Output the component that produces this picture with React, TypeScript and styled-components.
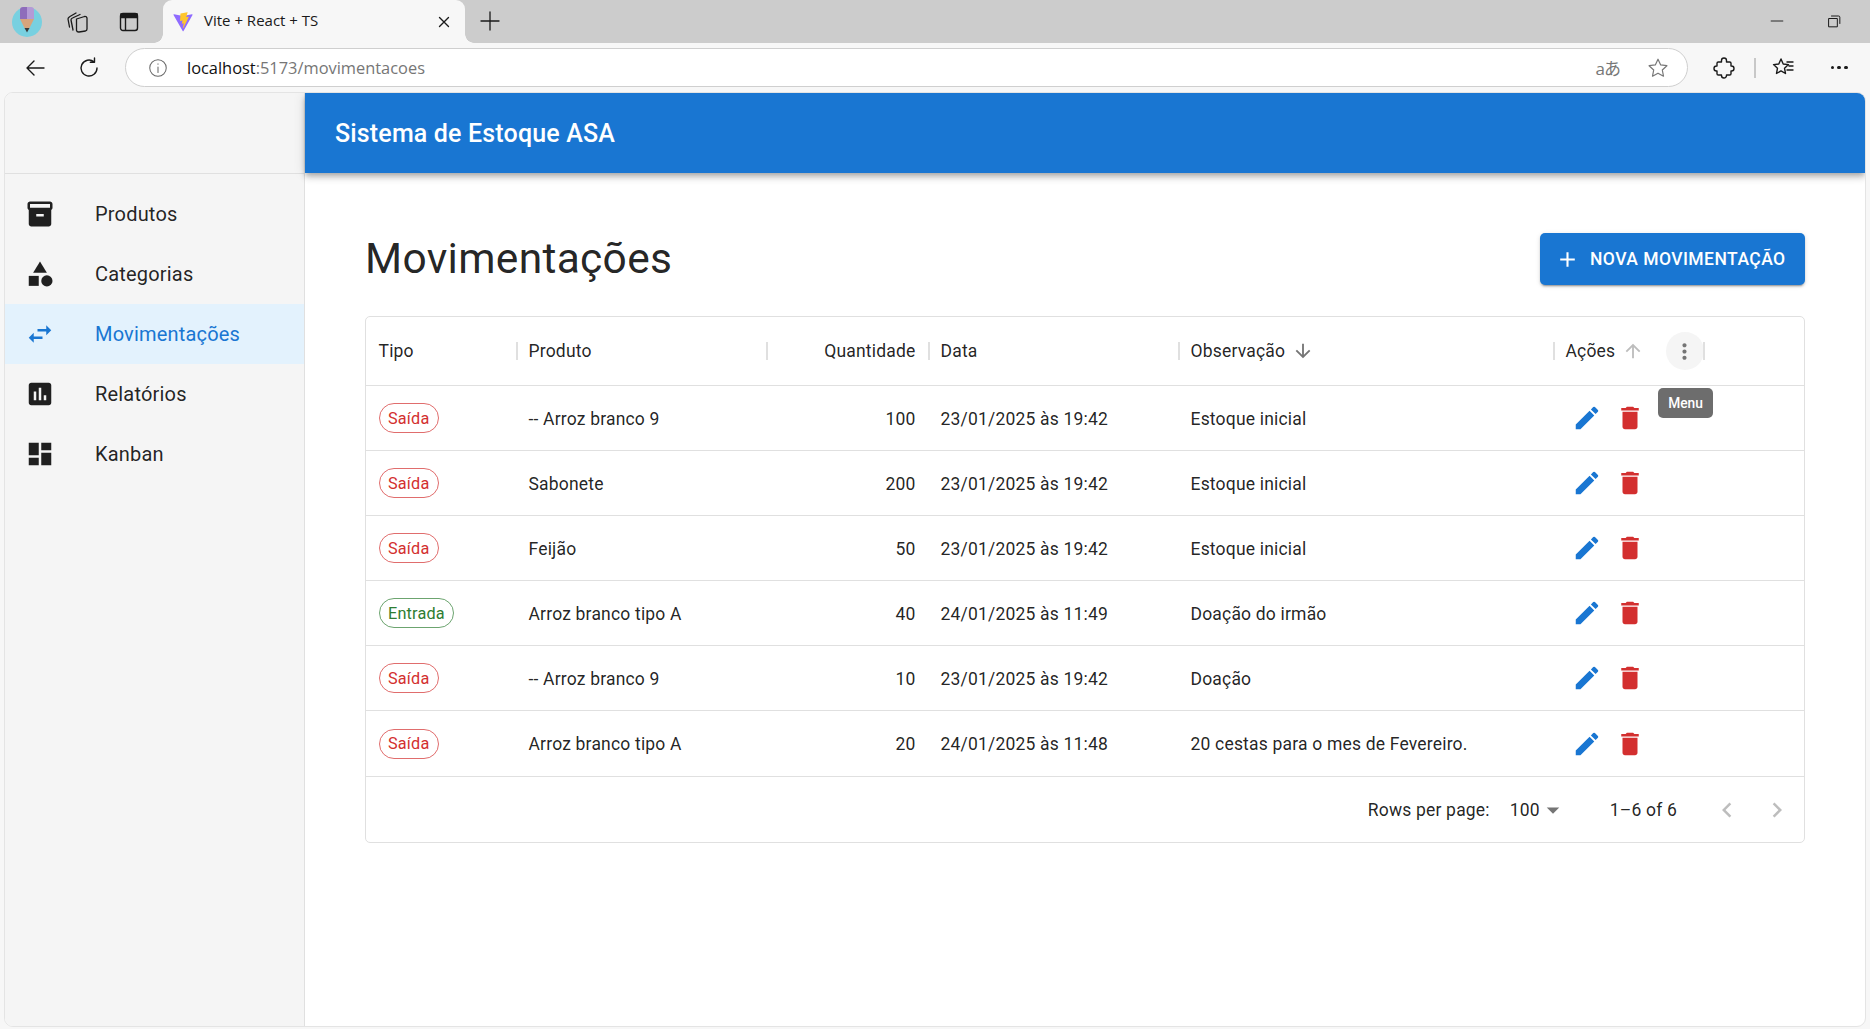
import { ReactNode } from "react"
import styled, { createGlobalStyle } from "styled-components"

const GlobalStyle = createGlobalStyle`
  html, body {
    margin: 0;
    padding: 0;
    background: #f7f7f7;
    overflow: hidden;
  }
  body {
    font-family: Roboto, "Liberation Sans", sans-serif;
    color: rgba(0, 0, 0, 0.87);
  }
  * { box-sizing: border-box; }
`

const Window = styled.div`
  width: 1870px;
  height: 1029px;
  display: flex;
  flex-direction: column;
`

/* browser chrome */
const TabStrip = styled.div`
  height: 43px;
  background: #cccccc;
  display: flex;
  align-items: center;
  padding-left: 12px;
  flex-shrink: 0;
`
const StripIcon = styled.div<{ $w: number }>`
  width: ${p => p.$w}px;
  display: flex;
  align-items: center;
  justify-content: center;
  flex-shrink: 0;
`
const Tab = styled.div`
  position: relative;
  width: 302px;
  height: 43px;
  margin-left: 19px;
  background: #f7f7f7;
  border-radius: 9px 9px 0 0;
  display: flex;
  align-items: center;
  padding: 0 12px 0 10px;
  font-family: "Open Sans", sans-serif;
  font-size: 15px;
  color: #1a1a1a;
  &::before,
  &::after {
    content: "";
    position: absolute;
    bottom: 0;
    width: 9px;
    height: 9px;
  }
  &::before {
    left: -9px;
    background: radial-gradient(circle at 0 0, #cccccc 8.5px, #f7f7f7 9px);
  }
  &::after {
    right: -9px;
    background: radial-gradient(circle at 100% 0, #cccccc 8.5px, #f7f7f7 9px);
  }
`
const TabTitle = styled.span`
  margin-left: 11px;
  padding-bottom: 3px;
  flex: 1;
`
const NewTab = styled.div`
  margin-left: 13px;
  padding-bottom: 2px;
  display: flex;
`
const WindowButtons = styled.div`
  margin-left: auto;
  display: flex;
  gap: 37px;
  padding: 0 26px 2px 0;
`
const AddressRow = styled.div`
  height: 49px;
  background: #f7f7f7;
  display: flex;
  align-items: center;
  flex-shrink: 0;
  padding-left: 23px;
`
const NavIcon = styled.div<{ $w: number }>`
  width: ${p => p.$w}px;
  display: flex;
  justify-content: flex-start;
`
const AddressBar = styled.div`
  width: 1563px;
  height: 39px;
  margin-left: -6px;
  background: #ffffff;
  border: 1px solid #cfcfcf;
  border-radius: 20px;
  display: flex;
  align-items: center;
  padding: 0 17px 0 21px;
  font-family: "Open Sans", sans-serif;
  font-size: 16.4px;
`
const Url = styled.span`
  margin-left: 18px;
  flex: 1;
  color: #111;
  span { color: #767676; }
`
const BarIcons = styled.div`
  display: flex;
  align-items: center;
  gap: 26px;
`
const TranslateGlyph = styled.span`
  font-family: "Open Sans", "Noto Sans CJK JP", sans-serif;
  font-size: 17px;
  color: #777777;
  letter-spacing: -1px;
`
const Toolbar = styled.div`
  display: flex;
  align-items: center;
  margin-left: 24px;
  flex: 1;
`
const ToolSep = styled.div`
  width: 1.5px;
  height: 20px;
  background: #c8c8c8;
  margin: 0 15.5px 0 18px;
`
const MoreDots = styled.div`
  display: flex;
  gap: 3.6px;
  margin-left: 35.5px;
`
const Dot = styled.span`
  width: 3.4px;
  height: 3.4px;
  border-radius: 50%;
  background: #1a1a1a;
`

/* app */
const AppFrame = styled.div`
  flex: 1;
  margin: 0 4px 2px 4px;
  display: flex;
  background: #ffffff;
  border: 1px solid #e4e4e4;
  border-radius: 9px;
  overflow: hidden;
  min-height: 0;
`
const Drawer = styled.aside`
  width: 300px;
  flex-shrink: 0;
  background: #f5f5f5;
  border-right: 1px solid #e0e0e0;
`
const DrawerHead = styled.div`
  height: 81px;
  border-bottom: 1px solid #e0e0e0;
  margin-bottom: 10px;
`
const NavItem = styled.div<{ $active?: boolean }>`
  height: 60px;
  display: flex;
  align-items: center;
  padding-left: 20px;
  gap: 40px;
  font-size: 20px;
  letter-spacing: 0.00938em;
  background: ${p => (p.$active ? "#e3f2fd" : "transparent")};
  color: ${p => (p.$active ? "#1976d2" : "rgba(0, 0, 0, 0.87)")};
`
const Content = styled.div`
  flex: 1;
  min-width: 0;
  display: flex;
  flex-direction: column;
`
const AppBar = styled.header`
  height: 80px;
  background: #1976d2;
  color: #ffffff;
  display: flex;
  align-items: center;
  padding-left: 30px;
  font-size: 25px;
  font-weight: 500;
  letter-spacing: 0.0065em;
  box-shadow: 0 2.5px 5px -1px rgba(0, 0, 0, 0.2), 0 5px 6px 0 rgba(0, 0, 0, 0.14), 0 1px 12px 0 rgba(0, 0, 0, 0.12);
  position: relative;
`
const Main = styled.main`
  padding: 60px;
`
const TitleRow = styled.div`
  display: flex;
  align-items: center;
  justify-content: space-between;
  height: 52px;
  margin-bottom: 31px;
`
const Title = styled.h1`
  margin: 0;
  font-size: 42.5px;
  font-weight: 400;
  line-height: 1;
  letter-spacing: 0.00735em;
`
const PrimaryButton = styled.button`
  height: 52px;
  width: 265px;
  border: 0;
  border-radius: 5px;
  background: #1976d2;
  color: #ffffff;
  font-family: inherit;
  font-size: 17.5px;
  font-weight: 500;
  letter-spacing: 0.45px;
  display: flex;
  align-items: center;
  gap: 10px;
  padding: 0 0 0 15px;
  white-space: nowrap;
  box-shadow: 0 3px 1px -2px rgba(0, 0, 0, 0.2), 0 2px 2px 0 rgba(0, 0, 0, 0.14), 0 1px 5px 0 rgba(0, 0, 0, 0.12);
`
const Grid = styled.div`
  position: relative;
  border: 1px solid #e0e0e0;
  border-radius: 5px;
  font-size: 17.5px;
  letter-spacing: 0.01071em;
`
const columns = "150px 250px 162px 250px 375px 150px"
const HeadRow = styled.div`
  display: grid;
  grid-template-columns: ${columns};
  height: 69px;
  border-bottom: 1px solid #e0e0e0;
`
const Row = styled.div<{ $tall?: boolean }>`
  display: grid;
  grid-template-columns: ${columns};
  height: ${p => (p.$tall ? 66 : 65)}px;
  border-bottom: 1px solid #e0e0e0;
`
const HeadCell = styled.div<{ $right?: boolean }>`
  display: flex;
  align-items: center;
  justify-content: ${p => (p.$right ? "flex-end" : "flex-start")};
  padding: 0 12.5px;
  position: relative;
  gap: 7px;
  &::after {
    content: "";
    position: absolute;
    right: -2px;
    top: 25px;
    height: 18px;
    width: 2px;
    background: #e0e0e0;
  }
`
const Cell = styled.div<{ $right?: boolean }>`
  display: flex;
  align-items: center;
  justify-content: ${p => (p.$right ? "flex-end" : "flex-start")};
  padding: 1px 12.5px 0;
  white-space: nowrap;
`
const ChipCell = styled(Cell)`
  padding-top: 0;
`
const ActionsCell = styled(Cell)`
  padding: 0 0 0 12px;
`
const ActionButton = styled.div`
  width: 43px;
  height: 43px;
  display: flex;
  align-items: center;
  justify-content: center;
`
const Chip = styled.span<{ $in: boolean }>`
  height: 30px;
  display: inline-flex;
  align-items: center;
  padding: 0 8.5px;
  border-radius: 15px;
  font-size: 16.25px;
  color: ${p => (p.$in ? "#2e7d32" : "#d32f2f")};
  border: 1px solid ${p => (p.$in ? "rgba(46, 125, 50, 0.7)" : "rgba(211, 47, 47, 0.7)")};
`
const MenuButton = styled.div`
  width: 38px;
  height: 38px;
  border-radius: 50%;
  background: #f5f5f5;
  display: flex;
  align-items: center;
  justify-content: center;
  margin-left: auto;
  margin-right: -13px;
  flex-shrink: 0;
`
const Tooltip = styled.div`
  position: absolute;
  left: 1292px;
  top: 71px;
  width: 55px;
  height: 30px;
  border-radius: 5px;
  background: rgba(97, 97, 97, 0.92);
  color: #ffffff;
  font-size: 13.75px;
  font-weight: 500;
  letter-spacing: 0;
  display: flex;
  align-items: center;
  justify-content: center;
`
const Footer = styled.div`
  height: 65px;
  display: flex;
  align-items: center;
  justify-content: flex-end;
  padding-right: 12px;
`
const RowsLabel = styled.span`
  margin-right: 20px;
`
const RowsSelect = styled.div`
  display: flex;
  align-items: center;
  margin-right: 30px;
  width: 70px;
  svg { margin-left: -2px; }
`
const PageInfo = styled.span`
  margin-right: 35px;
`
const Pager = styled.div`
  display: flex;
  gap: 20px;
`

const Svg = ({ size = 30, color = "currentColor", children }: { size?: number; color?: string; children: ReactNode }) => (
  <svg width={size} height={size} viewBox="0 0 24 24" fill={color} style={{ flexShrink: 0 }}>
    {children}
  </svg>
)

const DARK = "rgba(0, 0, 0, 0.87)"
const BLUE = "#1976d2"
const RED = "#d32f2f"
const GRAY = "#757575"

const EditIcon = () => (
  <Svg color={BLUE}>
    <path d="M3 17.25V21h3.75L17.81 9.94l-3.75-3.75L3 17.25zM20.71 7.04c.39-.39.39-1.02 0-1.41l-2.34-2.34a.9959.9959 0 0 0-1.41 0l-1.83 1.83 3.75 3.75 1.83-1.83z" />
  </Svg>
)
const DeleteIcon = () => (
  <Svg color={RED}>
    <path d="M6 19c0 1.1.9 2 2 2h8c1.1 0 2-.9 2-2V7H6v12zM19 4h-3.5l-1-1h-5l-1 1H5v2h14V4z" />
  </Svg>
)

const navItems = [
  {
    label: "Produtos",
    icon: <path d="M20 2H4c-1 0-2 .9-2 2v3.01c0 .72.43 1.34 1 1.69V20c0 1.1 1.1 2 2 2h14c.9 0 2-.9 2-2V8.7c.57-.35 1-.97 1-1.69V4c0-1.1-1-2-2-2zm-5 12H9v-2h6v2zm5-7H4V4l16-.02V7z" />,
  },
  {
    label: "Categorias",
    icon: (
      <>
        <path d="M12 2l-5.5 9h11z" />
        <circle cx="17.5" cy="17.5" r="4.5" />
        <path d="M3 13.5h8v8H3z" />
      </>
    ),
  },
  {
    label: "Movimentações",
    active: true,
    icon: <path d="M6.99 11L3 15l3.99 4v-3H14v-2H6.99v-3zM21 9l-4-4v3h-7v2h7v3l4-4z" />,
  },
  {
    label: "Relatórios",
    icon: <path d="M19 3H5c-1.1 0-2 .9-2 2v14c0 1.1.9 2 2 2h14c1.1 0 2-.9 2-2V5c0-1.1-.9-2-2-2zM9 17H7v-7h2v7zm4 0h-2V7h2v10zm4 0h-2v-4h2v4z" />,
  },
  {
    label: "Kanban",
    icon: <path d="M3 13h8V3H3v10zm0 8h8v-6H3v6zm10 0h8V11h-8v10zm0-18v6h8V3h-8z" />,
  },
]

const rows = [
  { tipo: "Saída", produto: "-- Arroz branco 9", qtd: 100, data: "23/01/2025 às 19:42", obs: "Estoque inicial" },
  { tipo: "Saída", produto: "Sabonete", qtd: 200, data: "23/01/2025 às 19:42", obs: "Estoque inicial" },
  { tipo: "Saída", produto: "Feijão", qtd: 50, data: "23/01/2025 às 19:42", obs: "Estoque inicial" },
  { tipo: "Entrada", produto: "Arroz branco tipo A", qtd: 40, data: "24/01/2025 às 11:49", obs: "Doação do irmão" },
  { tipo: "Saída", produto: "-- Arroz branco 9", qtd: 10, data: "23/01/2025 às 19:42", obs: "Doação" },
  { tipo: "Saída", produto: "Arroz branco tipo A", qtd: 20, data: "24/01/2025 às 11:48", obs: "20 cestas para o mes de Fevereiro." },
]

const Line = ({ d, w = 1.4, size = 22, color = "#1a1a1a" }: { d: string; w?: number; size?: number; color?: string }) => (
  <svg width={size} height={size} viewBox="0 0 24 24" fill="none" stroke={color} strokeWidth={w} strokeLinecap="round" strokeLinejoin="round" style={{ flexShrink: 0 }}>
    <path d={d} />
  </svg>
)

const STAR = "M12 3.2l2.7 5.7 6.2.8-4.6 4.3 1.2 6.2-5.5-3-5.5 3 1.2-6.2-4.6-4.3 6.2-.8z"
const PUZZLE = "M9.5 4.5a2.5 2.5 0 0 1 5 0V6h3.2a1.3 1.3 0 0 1 1.3 1.3V10h.5a2.5 2.5 0 0 1 0 5H19v2.7a1.3 1.3 0 0 1-1.3 1.3h-3.2v.5a2.5 2.5 0 0 1-5 0V19H6.3A1.3 1.3 0 0 1 5 17.7V15h-.5a2.5 2.5 0 0 1 0-5H5V7.3A1.3 1.3 0 0 1 6.3 6h3.2z"
const COLLECTIONS = "M10.5 9L18.5 6.5Q20.5 6.2 21 8V19Q21 20.5 19.5 21L13 22Q11 22.2 10.5 20.5zM7 20L5 10Q5 8.5 6.5 8L14 4.5M3.5 17L2 9Q2 7.5 3.5 6.8L10 3"

const BrowserChrome = () => (
  <>
    <TabStrip>
      <StripIcon $w={30}>
        <svg width="30" height="30" viewBox="0 0 30 30">
          <circle cx="15" cy="15" r="15" fill="#78d0e0" />
          <path d="M8 3q0-3 3-3h4v12H8z" fill="#8e6cbb" />
          <path d="M15 0h4q3 0 3 3v9h-7z" fill="#b49ad6" />
          <path d="M8 12h14l-4.5 9h-5z" fill="#d6a47c" />
          <path d="M12.5 21h5L15 25.5z" fill="#3a3a3a" />
        </svg>
      </StripIcon>
      <StripIcon $w={72}>
        <Line size={24} w={1.3} d={COLLECTIONS} />
      </StripIcon>
      <StripIcon $w={30}>
        <svg width="20" height="20" viewBox="0 0 20 20" fill="none" stroke="#1a1a1a" strokeWidth="1.4">
          <rect x="1.5" y="1.5" width="17" height="17" rx="2.5" />
          <path d="M6.5 5.5v13" />
          <path d="M2 2h16v3.5H2z" fill="#1a1a1a" />
        </svg>
      </StripIcon>
      <Tab>
        <svg width="20" height="20" viewBox="0 0 410 404">
          <path d="M399.6 59.5 215.9 388.2c-3.8 6.8-13.5 6.8-17.4.1L11.1 59.5c-4.2-7.4 2.1-16.3 10.4-14.8l183.9 32.9c1.2.2 2.4.2 3.5 0l180-32.8c8.3-1.5 14.7 7.3 10.6 14.7z" fill="#8f6bff" />
          <path d="M292.9 1.6 156.9 28.2c-2.2.4-3.9 2.3-4 4.6l-8.4 141.1c-.2 3.3 2.9 5.9 6.1 5.1l37.9-8.7c3.5-.8 6.7 2.3 6 5.8l-11.3 55.1c-.7 3.7 2.8 6.9 6.4 5.8l23.4-7.1c3.6-1.1 7.1 2.1 6.4 5.8l-17.9 86.6c-1.1 5.4 6.1 8.4 9.1 3.7l2-3.1 110.9-221.3c1.9-3.7-1.3-7.9-5.4-7.1l-39 7.5c-3.7.7-6.8-2.7-5.8-6.3l25.5-88.3c1-3.6-2.2-7.1-5.9-6.3z" fill="#ffc62c" />
        </svg>
        <TabTitle>Vite + React + TS</TabTitle>
        <Line size={18} w={1.8} d="M6 6l12 12M18 6L6 18" />
      </Tab>
      <NewTab>
        <Line size={24} w={1.3} d="M12 3v18M3 12h18" />
      </NewTab>
      <WindowButtons>
        <Line size={20} w={1.1} d="M5 12h14" />
        <Line size={20} d="M6 9h10v10H6zM9 6h8.5q1.5 0 1.5 1.5V15" w={1.2} />
      </WindowButtons>
    </TabStrip>
    <AddressRow>
      <NavIcon $w={54}>
        <Line size={24} w={1.4} d="M21 12H4M11 5l-7 7 7 7" />
      </NavIcon>
      <NavIcon $w={54}>
        <Line size={24} w={1.4} d="M20 12a8 8 0 1 1-3-6.2M17.5 2v4.2h-4.2" />
      </NavIcon>
      <AddressBar>
        <Line size={22} color="#666" w={1.1} d="M12 3a9 9 0 1 0 0 18a9 9 0 0 0 0-18zM12 11v6M12 7.5v.5" />
        <Url>
          localhost<span>:5173/movimentacoes</span>
        </Url>
        <BarIcons>
          <TranslateGlyph>aあ</TranslateGlyph>
          <Line size={24} w={1.2} color="#777" d={STAR} />
        </BarIcons>
      </AddressBar>
      <Toolbar>
        <Line size={24} w={1.4} d={PUZZLE} />
        <ToolSep />
        <Line size={24} w={1.4} d="M10 3l2.2 5 5.3.6-4 3.6 1 5.3-4.5-2.6-4.5 2.6 1-5.3-4-3.6 5.3-.6zM16 6h6M18 10h4M16 14h6" />
        <MoreDots>
          <Dot />
          <Dot />
          <Dot />
        </MoreDots>
      </Toolbar>
    </AddressRow>
  </>
)

export default function App() {
  return (
    <Window>
      <GlobalStyle />
      <BrowserChrome />
      <AppFrame>
        <Drawer>
          <DrawerHead />
          {navItems.map(item => (
            <NavItem key={item.label} $active={item.active}>
              <Svg color={item.active ? BLUE : DARK}>{item.icon}</Svg>
              <span>{item.label}</span>
            </NavItem>
          ))}
        </Drawer>
        <Content>
          <AppBar>Sistema de Estoque ASA</AppBar>
          <Main>
            <TitleRow>
              <Title>Movimentações</Title>
              <PrimaryButton>
                <Svg size={25} color="#ffffff">
                  <path d="M19 13h-6v6h-2v-6H5v-2h6V5h2v6h6v2z" />
                </Svg>
                NOVA MOVIMENTAÇÃO
              </PrimaryButton>
            </TitleRow>
            <Grid>
              <HeadRow>
                <HeadCell>Tipo</HeadCell>
                <HeadCell>Produto</HeadCell>
                <HeadCell $right>Quantidade</HeadCell>
                <HeadCell>Data</HeadCell>
                <HeadCell>
                  Observação
                  <Svg size={22} color={GRAY}>
                    <path d="M20 12l-1.41-1.41L13 16.17V4h-2v12.17l-5.58-5.59L4 12l8 8 8-8z" />
                  </Svg>
                </HeadCell>
                <HeadCell>
                  Ações
                  <Svg size={22} color="#bdbdbd">
                    <path d="M4 12l1.41 1.41L11 7.83V20h2V7.83l5.58 5.59L20 12l-8-8-8 8z" />
                  </Svg>
                  <MenuButton>
                    <Svg size={25} color={GRAY}>
                      <path d="M12 8c1.1 0 2-.9 2-2s-.9-2-2-2-2 .9-2 2 .9 2 2 2zm0 2c-1.1 0-2 .9-2 2s.9 2 2 2 2-.9 2-2-.9-2-2-2zm0 6c-1.1 0-2 .9-2 2s.9 2 2 2 2-.9 2-2-.9-2-2-2z" />
                    </Svg>
                  </MenuButton>
                </HeadCell>
              </HeadRow>
              {rows.map((r, i) => (
                <Row key={i} $tall={i === rows.length - 1}>
                  <ChipCell>
                    <Chip $in={r.tipo === "Entrada"}>{r.tipo}</Chip>
                  </ChipCell>
                  <Cell>{r.produto}</Cell>
                  <Cell $right>{r.qtd}</Cell>
                  <Cell>{r.data}</Cell>
                  <Cell>{r.obs}</Cell>
                  <ActionsCell>
                    <ActionButton>
                      <EditIcon />
                    </ActionButton>
                    <ActionButton>
                      <DeleteIcon />
                    </ActionButton>
                  </ActionsCell>
                </Row>
              ))}
              <Footer>
                <RowsLabel>Rows per page:</RowsLabel>
                <RowsSelect>
                  100
                  <Svg size={30} color={GRAY}>
                    <path d="M7 10l5 5 5-5z" />
                  </Svg>
                </RowsSelect>
                <PageInfo>1–6 of 6</PageInfo>
                <Pager>
                  <Svg color="#bdbdbd">
                    <path d="M15.41 16.59L10.83 12l4.58-4.59L14 6l-6 6 6 6 1.41-1.41z" />
                  </Svg>
                  <Svg color="#bdbdbd">
                    <path d="M8.59 16.59L13.17 12 8.59 7.41 10 6l6 6-6 6-1.41-1.41z" />
                  </Svg>
                </Pager>
              </Footer>
              <Tooltip>Menu</Tooltip>
            </Grid>
          </Main>
        </Content>
      </AppFrame>
    </Window>
  )
}
